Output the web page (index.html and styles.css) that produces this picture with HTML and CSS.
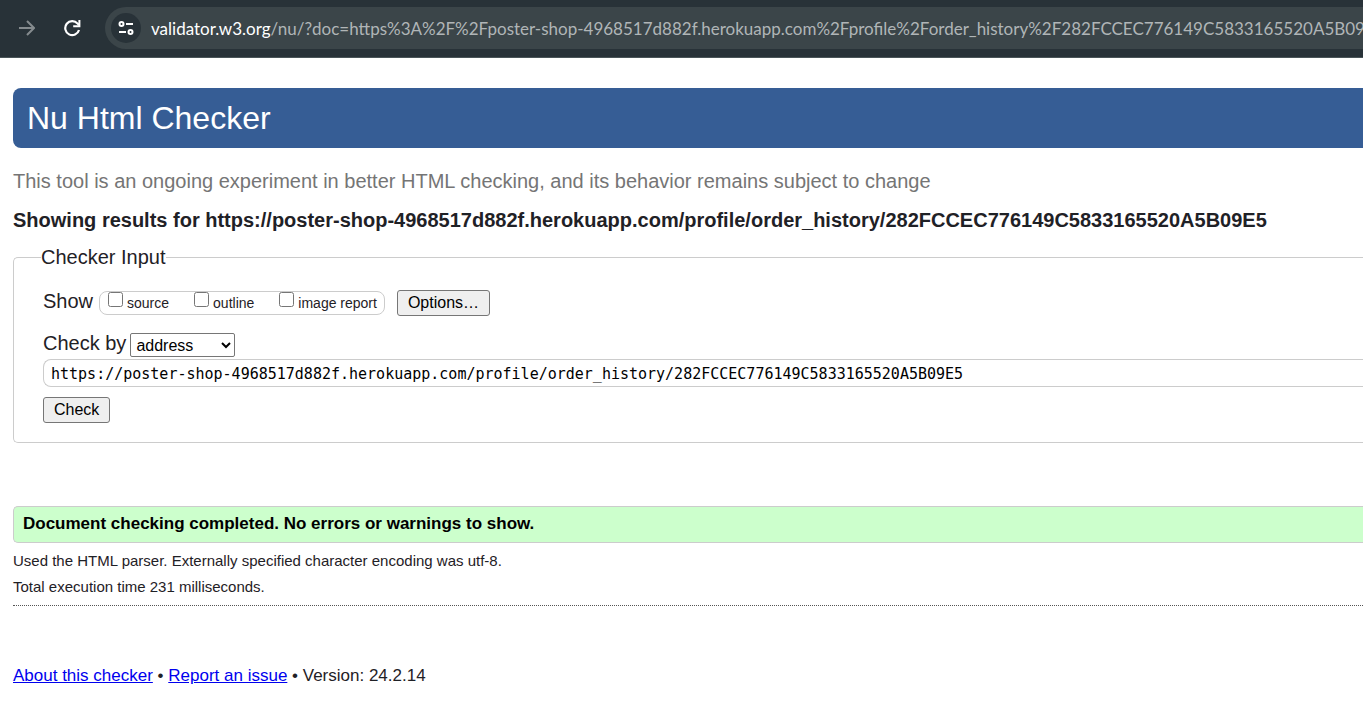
FILE: index.html
```html
<!DOCTYPE html>
<html lang="en">
<head>
<meta charset="utf-8">
<title>Nu Html Checker</title>
<link rel="stylesheet" href="styles.css">
</head>
<body>
<header class="toolbar">
  <button class="nav-button" type="button" aria-label="Forward">
    <svg width="16" height="16" viewBox="0 0 16 16" fill="none" stroke="#858b8e" stroke-width="2"><path d="M0 8h14M8 1l7 7-7 7"/></svg>
  </button>
  <button class="nav-button" type="button" aria-label="Reload">
    <svg width="18" height="18" viewBox="0 0 18 18" fill="none" stroke="#fff" stroke-width="2.2"><path d="M16 11A7 7 0 1 1 14.6 4.6L16 6"/><path d="M16.4 1v6.2h-6.2" stroke-width="2"/></svg>
  </button>
  <div class="address-bar">
    <button class="site-info" type="button" aria-label="View site information">
      <svg width="16" height="14" viewBox="0 0 16 14" fill="none" stroke="#fff" stroke-width="2"><circle cx="3.5" cy="3" r="2"/><path d="M8 3h7M1 11h7"/><circle cx="12.5" cy="11" r="2"/></svg>
    </button>
    <span class="url"><span class="host">validator.w3.org</span>/nu/?doc=https%3A%2F%2Fposter-shop-4968517d882f.herokuapp.com%2Fprofile%2Forder_history%2F282FCCEC776149C5833165520A5B09E5</span>
  </div>
</header>
<main class="page">
  <h1 class="banner">Nu Html Checker</h1>
  <p class="notice">This tool is an ongoing experiment in better HTML checking, and its behavior remains subject to change</p>
  <h2 class="results-for">Showing results for https://poster-shop-4968517d882f.herokuapp.com/profile/order_history/282FCCEC776149C5833165520A5B09E5</h2>
  <form>
    <fieldset class="checker">
      <legend>Checker Input</legend>
      <div class="row show-row">
        <span class="row-label">Show</span>
        <div class="options">
          <label class="option"><input type="checkbox">source</label>
          <label class="option"><input type="checkbox">outline</label>
          <label class="option"><input type="checkbox">image report</label>
        </div>
        <button class="button" type="button">Options…</button>
      </div>
      <div class="row method-row">
        <label class="row-label" for="method">Check by</label>
        <select id="method" class="method"><option>address</option><option>file upload</option><option>text input</option></select>
      </div>
      <input class="document" type="text" aria-label="Document address" value="https://poster-shop-4968517d882f.herokuapp.com/profile/order_history/282FCCEC776149C5833165520A5B09E5">
      <button class="button" type="button">Check</button>
    </fieldset>
  </form>
  <p class="success">Document checking completed. No errors or warnings to show.</p>
  <div class="details">
    <p>Used the HTML parser. Externally specified character encoding was utf-8.</p>
    <p>Total execution time 231 milliseconds.</p>
  </div>
  <footer class="footer"><a href="#about">About this checker</a> • <a href="#issue">Report an issue</a> • Version: 24.2.14</footer>
</main>
</body>
</html>
```
FILE: styles.css
```css
* { box-sizing: border-box; }
body {
  margin: 0;
  background: #fff;
  color: #1f2126;
  font-family: "Liberation Sans", Arial, sans-serif;
  overflow-x: hidden;
}
h1, h2, p { margin: 0; }

.toolbar {
  display: flex;
  align-items: center;
  height: 58px;
  padding: 0 0 2px 15px;
  background: #283238;
  border-bottom: 1px solid #4a5559;
}
.nav-button {
  display: flex;
  align-items: center;
  justify-content: center;
  width: 24px;
  height: 24px;
  margin-right: 21px;
  padding: 0;
  border: 0;
  background: none;
}
.address-bar {
  display: flex;
  flex: 1;
  align-items: center;
  gap: 10px;
  min-width: 0;
  height: 42px;
  padding-left: 6px;
  overflow: hidden;
  border-radius: 21px 0 0 21px;
  background: #3b4549;
}
.site-info {
  display: flex;
  flex: none;
  align-items: center;
  justify-content: center;
  width: 30px;
  height: 30px;
  padding: 0;
  border: 0;
  border-radius: 50%;
  background: #283238;
}
.url {
  padding-top: 2px;
  color: #b0b5b7;
  font: 17px/24px Lato, "Noto Sans", sans-serif;
  white-space: nowrap;
}
.host { color: #fff; }

.page { padding: 30px 0 20px 13px; }
.banner {
  padding: 10px 14px;
  border-radius: 8px 0 0 8px;
  background: #365d95;
  color: #fff;
  font-size: 32px;
  font-weight: 400;
  line-height: 40px;
}
.notice {
  margin-top: 20px;
  color: #757575;
  font-size: 20px;
  line-height: 26px;
}
.results-for {
  margin-top: 12px;
  font-size: 20px;
  line-height: 28px;
}
.checker {
  min-width: 0;
  margin: 11px 0 0;
  padding: 20px 0 19px 29px;
  border: 1px solid #ccc;
  border-right: 0;
  border-radius: 5px 0 0 5px;
}
.checker legend {
  margin-left: -2px;
  padding: 0;
  font-size: 20px;
  line-height: 24px;
}
.row { display: flex; align-items: center; }
.row-label { padding-bottom: 4px; font-size: 20px; line-height: 24px; }
.show-row { height: 28px; }
.options {
  display: flex;
  gap: 25px;
  height: 24px;
  margin: 0 12px 0 6px;
  padding: 0 7px 0 8px;
  border: 1px solid #ccc;
  border-radius: 8px;
}
.option {
  display: flex;
  gap: 4px;
  font-size: 14px;
  line-height: 22px;
}
.option input { width: 15px; height: 15px; margin: 0; }
.button {
  display: block;
  height: 26px;
  padding: 0 10px;
  border: 1px solid #767676;
  border-radius: 3px;
  background: #efefef;
  color: #000;
  font: 16px/22px "Liberation Sans", Arial, sans-serif;
}
.method-row { gap: 4px; height: 24px; margin-top: 16px; }
.method {
  width: 105px;
  height: 24px;
  padding: 0 1px;
  border: 1px solid #767676;
  border-radius: 2px;
  background: #fff;
  color: #000;
  font: 16px "Liberation Sans", Arial, sans-serif;
}
.document {
  display: block;
  width: 100%;
  height: 28px;
  margin: 2px 0 10px;
  padding: 2px 7px 0;
  border: 1px solid #ccc;
  border-right: 0;
  border-radius: 8px 0 0 8px;
  color: #000;
  font: 15px "DejaVu Sans Mono", monospace;
}
.success {
  margin-top: 63px;
  padding: 4px 9px 6px;
  border: 1px solid #ccc;
  border-right: 0;
  border-radius: 5px 0 0 5px;
  background: #cfc;
  color: #000;
  font-size: 17px;
  font-weight: 700;
  line-height: 25px;
}
.details {
  margin-top: 5px;
  padding-bottom: 5px;
  border-bottom: 1px dotted #555;
  font-size: 15px;
  line-height: 26px;
}
.footer { margin-top: 58px; font-size: 17px; line-height: 24px; }
.footer a { color: #00e; }
```
